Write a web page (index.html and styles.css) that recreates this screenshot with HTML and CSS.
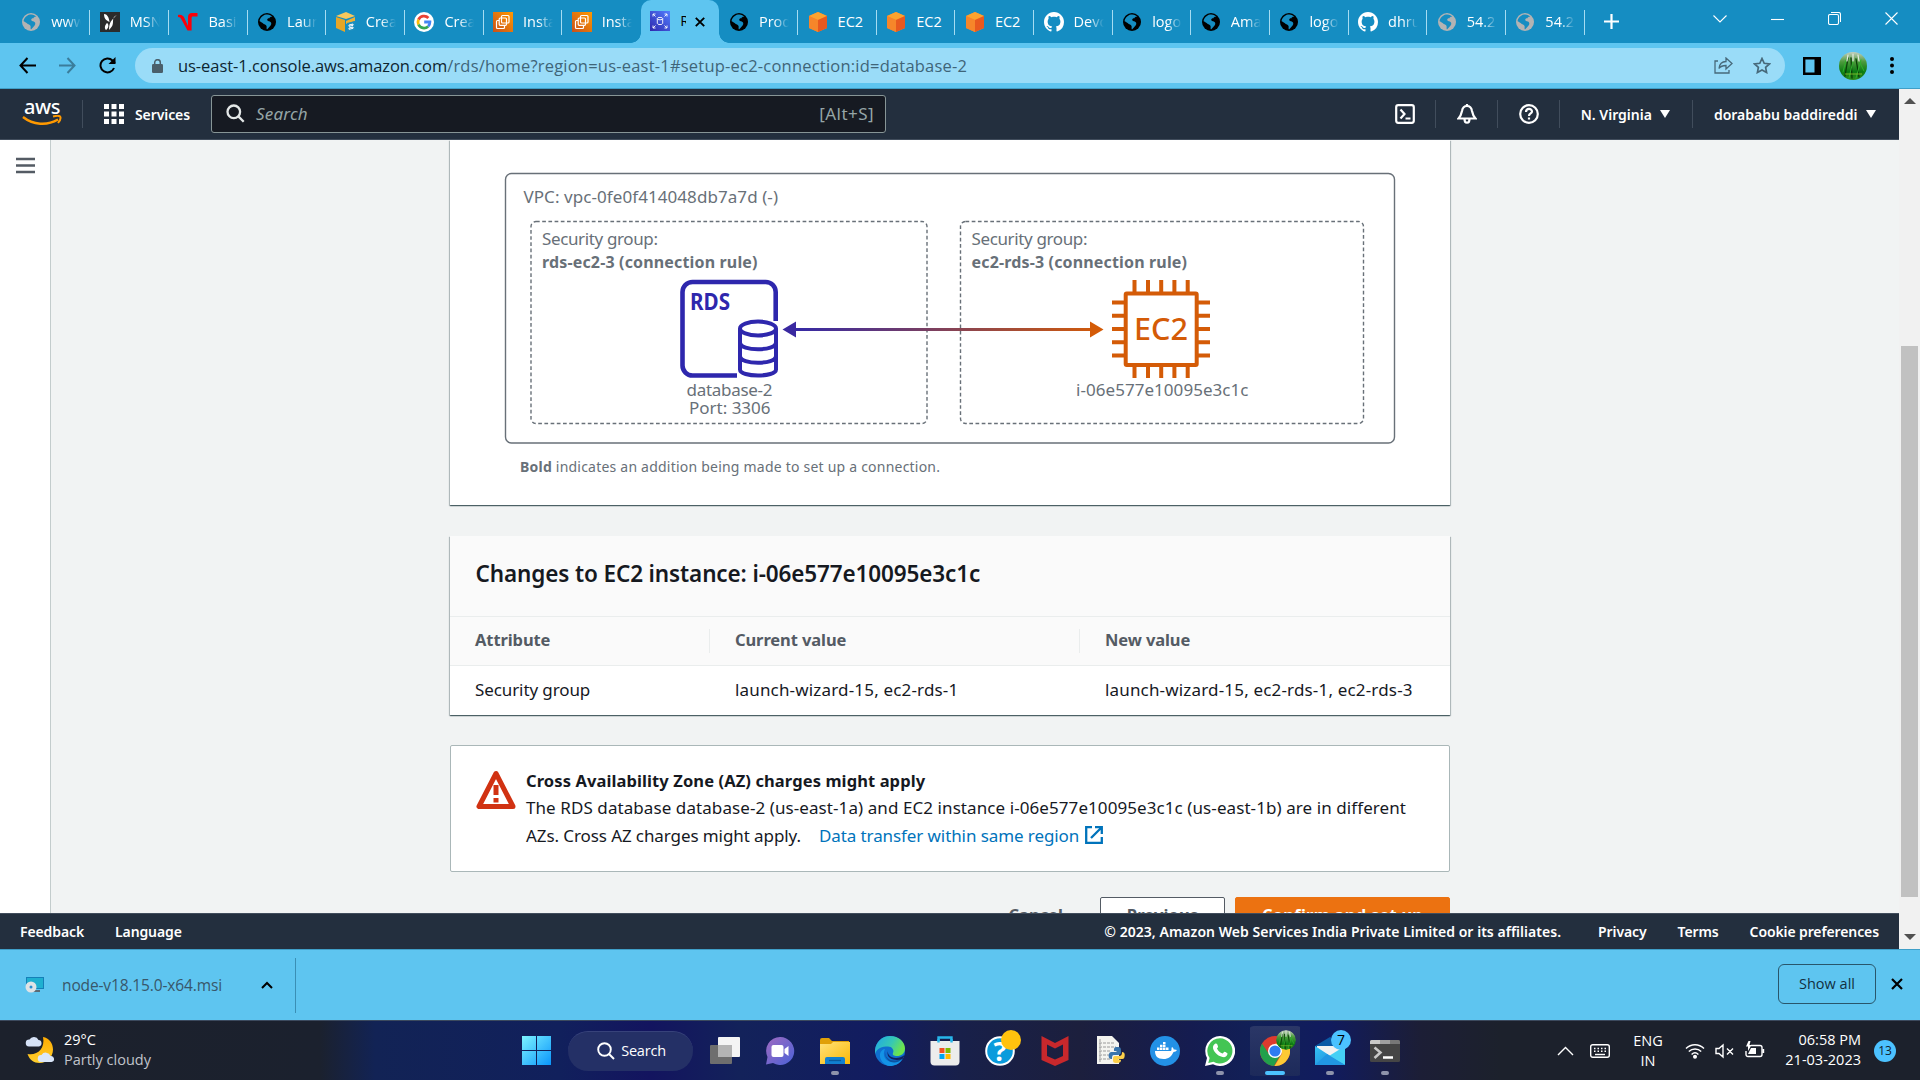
FILE: index.html
```html
<!DOCTYPE html>
<html lang="en">
<head>
<meta charset="utf-8">
<title>RDS - Set up EC2 connection</title>
<link rel="stylesheet" href="styles.css">
</head>
<body>
<svg class="defs" width="0" height="0">
  <defs>
    <linearGradient id="gInst" x1="0" y1="1" x2="1" y2="0"><stop offset="0" stop-color="#c8511b"/><stop offset="1" stop-color="#f90"/></linearGradient>
    <linearGradient id="gRds" x1="0" y1="1" x2="1" y2="0"><stop offset="0" stop-color="#2e27ad"/><stop offset="1" stop-color="#527fff"/></linearGradient>
    <linearGradient id="gArrow" gradientUnits="userSpaceOnUse" x1="782" y1="0" x2="1103" y2="0"><stop offset="0" stop-color="#2e27ad"/><stop offset="1" stop-color="#d45b07"/></linearGradient>
    <linearGradient id="gWin" x1="0" y1="0" x2="1" y2="1"><stop offset="0" stop-color="#7df3ff"/><stop offset="1" stop-color="#0a95fb"/></linearGradient>
    <linearGradient id="gTeams" x1="0" y1="0" x2="1" y2="1"><stop offset="0" stop-color="#a06ac0"/><stop offset="1" stop-color="#4a62d8"/></linearGradient>
    <linearGradient id="gFolder" x1="0" y1="0" x2="1" y2="1"><stop offset="0" stop-color="#ffe27a"/><stop offset="1" stop-color="#fbb805"/></linearGradient>
    <linearGradient id="gEdge" x1="0" y1="0" x2="1" y2=".4"><stop offset="0" stop-color="#1fa6e8"/><stop offset=".6" stop-color="#36c8b4"/><stop offset="1" stop-color="#6de44d"/></linearGradient>
    <linearGradient id="gMoon" x1="0" y1="0" x2="0" y2="1"><stop offset="0" stop-color="#ffab00"/><stop offset="1" stop-color="#ffcf2e"/></linearGradient>
    <linearGradient id="gMail" x1="0" y1="0" x2="1" y2="1"><stop offset="0" stop-color="#35c1f3"/><stop offset="1" stop-color="#1b84d8"/></linearGradient>
    <linearGradient id="gGrass" x1="0" y1="0" x2="0" y2="1"><stop offset="0" stop-color="#c4cfc0"/><stop offset=".35" stop-color="#4c9a3c"/><stop offset=".7" stop-color="#0b7a12"/><stop offset="1" stop-color="#2f8a1c"/></linearGradient>
  </defs>
  <symbol id="globe" viewBox="0 0 20 20"><circle cx="10" cy="10" r="9" fill="currentColor"/><path d="M9 2.500c3-.4 5 .6 6.300 2.300-1.500-.3-2.600.3-2.800 1.400-1.300-.2-2.300.4-2.300 1.600 0 1.300 1.500 1.300 2.600 1.700 1.600.6 2 2.400.8 4-1 1.400-2.400 2.600-3.600 4-.8-.6-.2-2-.4-3.200-.3-1.500-2.600-1.800-4-3.200C4.500 10 3.400 9.500 2.600 9.200 2.800 6.300 5.500 3.200 9 2.500z" class="globe-land"/></symbol>
  <symbol id="gh" viewBox="0 0 16 16"><path fill="#fff" d="M8 0C3.580 0 0 3.580 0 8c0 3.540 2.290 6.530 5.470 7.590.4.070.55-.17.55-.38 0-.19-.01-.82-.01-1.490-2.010.37-2.530-.49-2.690-.94-.09-.23-.48-.94-.82-1.130-.28-.15-.68-.52-.01-.53.63-.01 1.080.58 1.230.82.72 1.210 1.870.87 2.330.66.07-.52.28-.87.51-1.070-1.780-.2-3.640-.89-3.640-3.950 0-.87.31-1.590.82-2.150-.08-.2-.36-1.020.08-2.120 0 0 .67-.21 2.200.82.64-.18 1.320-.27 2-.27s1.360.09 2 .27c1.530-1.040 2.200-.82 2.200-.82.44 1.100.16 1.920.08 2.120.51.56.82 1.270.82 2.150 0 3.070-1.870 3.750-3.650 3.950.29.25.54.73.54 1.480 0 1.070-.01 1.930-.01 2.200 0 .21.15.46.55.38A8.010 8.010 0 0 0 16 8c0-4.420-3.580-8-8-8z"/></symbol>
  <symbol id="cube" viewBox="0 0 20 20"><path d="M10 0l9 4v12l-9 4-9-4V4z" fill="#f58536"/><path d="M10 0l9 4-9 4-9-4z" fill="#fda32e"/><path d="M10 8l9-4v12l-9 4z" fill="#e8591f"/><path d="M1 4l9 4v12l-9-4z" fill="#f6862a"/></symbol>
  <symbol id="inst" viewBox="0 0 20 20"><path d="M0 0h20v20H0z" fill="url(#gInst)"/><g fill="none" stroke="#fff" stroke-width="1.200"><rect x="8.500" y="3.500" width="7.500" height="7.500" rx="1"/><rect x="6.200" y="6" width="7.300" height="7.300" rx="1"/><path d="M6 8.500H4.500a1 1 0 0 0-1 1v6a1 1 0 0 0 1 1h6a1 1 0 0 0 1-1v-2"/></g></symbol>
  <symbol id="google" viewBox="0 0 20 20"><circle cx="10" cy="10" r="10" fill="#fff"/><g fill="none" stroke-width="2.800"><path d="M14.400 6a6 6 0 0 0-9.900 1.600" stroke="#ea4335"/><path d="M4.500 7.600a6 6 0 0 0 0 4.900" stroke="#fbbc05"/><path d="M4.500 12.500a6 6 0 0 0 9.600 1.900" stroke="#34a853"/><path d="M10.200 10h5.700c0 1.800-.6 3.300-1.800 4.400" stroke="#4285f4"/></g></symbol>
  <symbol id="grass" viewBox="0 0 28 28"><circle cx="14" cy="14" r="14" fill="url(#gGrass)"/><g fill="none" stroke-linecap="round"><path d="M6 24L9 6M13 26l-1-20M20 25L17 7" stroke="#0a3d08" stroke-width="1.300"/><path d="M4 20L7 8M10 26L14 9M17 26L22 8M25 19l-4-8" stroke="#2fb02c" stroke-width="1"/><path d="M9 3l-1 6M14 2v7M19 3l1 6" stroke="#e6ece4" stroke-width="1.200"/></g><path d="M6 22h17" stroke="#96c431" stroke-width=".8"/></symbol>
</svg>

<div class="tabs">
  <div class="tab"><svg class="fav gray"><use href="#globe"/></svg><span>www.</span></div>
  <div class="tab"><svg class="fav" viewBox="0 0 20 20"><path d="M0 0h20v20H0z" fill="#2b2b2b"/><path d="M4 2c3 0 5 3 5.500 8C8 9 4 8 4 2zM17 3c-3 1-4 3-4 6s0 5-4 9c0-5 1-8 3-10s3-4 5-5zM7 11c2 1 2 5-1 7-2-2-1-5 1-7z" fill="#fff"/></svg><span>MSN</span></div>
  <div class="tab"><svg class="fav" viewBox="0 0 20 20"><path d="M0 3c3-.8 5.500.5 6.500 3.200L10 14V5c0-2.500 1.500-4 4-4h5.500v3.500H15c-1 0-1.400.5-1.400 1.500v12.500H9.500L3.500 7.500C2.800 5.800 1.800 5 0 5z" fill="#fb0009"/></svg><span>Basic</span></div>
  <div class="tab"><svg class="fav"><use href="#globe"/></svg><span>Laun</span></div>
  <div class="tab"><svg class="fav" viewBox="0 0 20 20"><path d="M0 4l10-4 9 4-9 3z" fill="#f9c85d"/><path d="M0 5l9 3v12l-9-4z" fill="#e8a626"/><path d="M10 9l9-4v4l-9 3z" fill="#f0b133"/><path d="M11 11l8-2v9l-8 2z" fill="#1d8fc0"/><path d="M13 13l4-1v1.300l-4 1zM13 16l4-1v1.300l-4 1z" stroke="#fff" fill="none"/></svg><span>Creat</span></div>
  <div class="tab"><svg class="fav"><use href="#google"/></svg><span>Creat</span></div>
  <div class="tab"><svg class="fav"><use href="#inst"/></svg><span>Instan</span></div>
  <div class="tab"><svg class="fav"><use href="#inst"/></svg><span>Instan</span></div>
  <div class="tab active"><svg class="fav" viewBox="0 0 20 20"><path d="M0 0h20v20H0z" fill="url(#gRds)"/><g fill="none" stroke="#fff" stroke-width=".9"><path d="M3 5.500V3h2.500M14.500 3H17v2.500M17 14.500V17h-2.500M5.500 17H3v-2.500M3 3l2.500 2.500M17 3l-2.500 2.500M17 17l-2.500-2.500M3 17l2.500-2.500"/><ellipse cx="10" cy="7.600" rx="2.700" ry="1.200"/><path d="M7.300 7.600v4.800c0 1.600 5.400 1.600 5.400 0V7.600"/></g></svg><span>R</span><svg class="tab-x" viewBox="0 0 10 10"><path d="M.8.800l8.400 8.400M9.200.800L.8 9.200" stroke="#000" stroke-width="1.900"/></svg></div>
  <div class="tab"><svg class="fav"><use href="#globe"/></svg><span>Prod</span></div>
  <div class="tab"><svg class="fav"><use href="#cube"/></svg><span class="full">EC2</span></div>
  <div class="tab"><svg class="fav"><use href="#cube"/></svg><span class="full">EC2</span></div>
  <div class="tab"><svg class="fav"><use href="#cube"/></svg><span class="full">EC2</span></div>
  <div class="tab"><svg class="fav"><use href="#gh"/></svg><span>Devo</span></div>
  <div class="tab"><svg class="fav"><use href="#globe"/></svg><span>logo</span></div>
  <div class="tab"><svg class="fav"><use href="#globe"/></svg><span>Ama</span></div>
  <div class="tab"><svg class="fav"><use href="#globe"/></svg><span>logo</span></div>
  <div class="tab"><svg class="fav"><use href="#gh"/></svg><span>dhru</span></div>
  <div class="tab"><svg class="fav gray"><use href="#globe"/></svg><span>54.2</span></div>
  <div class="tab"><svg class="fav gray"><use href="#globe"/></svg><span>54.2</span></div>
  <svg class="plus" viewBox="0 0 15 15"><path d="M7.500 0v15M0 7.500h15" stroke="#fff" stroke-width="2.200"/></svg>
  <div class="winctl">
    <svg width="14" height="8" viewBox="0 0 14 8"><path d="M.5.500L7 7 13.500.500"/></svg>
    <svg width="13" height="8" viewBox="0 0 13 8"><path d="M0 4.500h13"/></svg>
    <svg width="13" height="13" viewBox="0 0 13 13"><rect x=".5" y="2.500" width="10" height="10" rx="1.500"/><path d="M3 .5h7.500a2 2 0 0 1 2 2V10"/></svg>
    <svg width="13" height="13" viewBox="0 0 13 13"><path d="M.5.500l12 12M12.500.500l-12 12"/></svg>
  </div>
</div>

<div class="toolbar">
  <svg class="nav-ic" viewBox="0 0 17 17"><path d="M8.500 1L1.500 8.500l7 7.500M1.500 8.500H17" stroke="#000"/></svg>
  <svg class="nav-ic" viewBox="0 0 17 17"><path d="M8.500 1l7 7.500-7 7.500M15.500 8.500H0" stroke="#3a7d9b"/></svg>
  <svg class="nav-ic" viewBox="0 0 17 17"><path d="M15 11a7 7 0 1 1-1.500-7.500L16 6" stroke="#000"/><path d="M16.500 0v7h-7z" fill="#000" stroke="none"/></svg>
  <div class="omni">
    <svg width="11" height="14" viewBox="0 0 11 14"><rect y="5" width="11" height="9" rx="1.200" fill="#4a5f6b"/><path d="M2.700 5V3.500a2.800 2.800 0 0 1 5.600 0V5" fill="none" stroke="#4a5f6b" stroke-width="1.500"/></svg>
    <span class="url"><b>us-east-1.console.aws.amazon.com</b>/rds/home?region=us-east-1#setup-ec2-connection:id=database-2</span>
    <svg width="19" height="17" viewBox="0 0 19 17"><path d="M4 4H1v12h14v-3M5 11.500c.5-4.500 3.500-7 7-7V1l6 5.500L12 12V8.500c-3 0-5.500.8-7 3z" fill="none" stroke="#47697a" stroke-width="1.300"/></svg>
    <svg class="star" width="18" height="17" viewBox="0 0 18 17"><path d="M9 1.500l2.200 4.800 5.300.6-3.900 3.500 1 5.100L9 13l-4.600 2.500 1-5.100L1.500 6.900l5.300-.6z" fill="none" stroke="#47697a" stroke-width="1.700"/></svg>
  </div>
  <svg class="side" width="18" height="18" viewBox="0 0 18 18"><path d="M1.200 1.200h15.600v15.600H1.200z" fill="none" stroke="#000" stroke-width="2.400"/><path d="M11.500 1H17v16h-5.500z"/></svg>
  <svg class="ava" width="28" height="28"><use href="#grass"/></svg>
  <svg class="dots" width="4" height="17" viewBox="0 0 4 17"><circle cx="2" cy="2" r="2"/><circle cx="2" cy="8.500" r="2"/><circle cx="2" cy="15" r="2"/></svg>
</div>

<div class="viewport">
  <div class="page">
    <header class="aws">
      <div class="logo"><span class="logo-t">aws</span><svg viewBox="0 0 40 12" width="40" height="12"><path d="M1 2c10 8 24 9 35 2.500" fill="none" stroke="#f90" stroke-width="2.400"/><path d="M31 1.500c4-1 6-1 7 0s0 4-2 6.500" fill="none" stroke="#f90" stroke-width="2"/></svg></div>
      <i class="sep s1"></i>
      <svg class="grid" width="20" height="20" viewBox="0 0 20 20" fill="#fff"><path d="M0 0h5v5H0zM7.500 0h5v5h-5zM15 0h5v5h-5zM0 7.500h5v5H0zM7.500 7.500h5v5h-5zM15 7.500h5v5h-5zM0 15h5v5H0zM7.500 15h5v5h-5zM15 15h5v5h-5z"/></svg>
      <span class="svc e15m">Services</span>
      <div class="search"><svg width="19" height="19" viewBox="0 0 19 19" fill="none" stroke="#e4e8e8" stroke-width="2.300"><circle cx="7.800" cy="7.800" r="6.300"/><path d="M12.400 12.400l5.300 5.300"/></svg><em>Search</em><span class="alt">[Alt+S]</span></div>
      <div class="aws-r">
        <svg class="ic" viewBox="0 0 20 20"><rect x="1.200" y="1.200" width="17.600" height="17.600" rx="2"/><path d="M5.500 5.500L9.500 10l-4 4.500M10.500 14.500h5"/></svg>
        <i class="sep"></i>
        <svg class="ic" viewBox="0 0 20 20"><path d="M1.500 14.500C4 12 4.500 9.500 5 7c.5-3 2-5 5-5s4.500 2 5 5c.5 2.500 1 5 3.500 7.500zM7.500 15c0 5 5 5 5 0"/><path d="M10 0v2"/></svg>
        <i class="sep"></i>
        <svg class="ic" viewBox="0 0 20 20"><circle cx="10" cy="10" r="8.800"/><path d="M7 8c0-4 6-4 6-.5 0 2-3 2-3 4.500M10 13.500v2"/></svg>
        <i class="sep"></i>
        <span class="region e15m">N. Virginia</span><i class="tri"></i>
        <i class="sep s2"></i>
        <span class="user e15m">dorababu baddireddi</span><i class="tri"></i>
      </div>
    </header>
    <div class="body">
      <aside><svg width="19" height="17" viewBox="0 0 19 17"><path d="M0 2h19M0 8.500h19M0 15h19" stroke="#545b64" stroke-width="2.400"/></svg></aside>
      <main>
        <section class="card diagram">
          <svg width="1000" height="365" viewBox="450 140 1000 365">
            <g fill="none" stroke="#687078">
              <rect x="505.500" y="173.500" width="889" height="269.500" rx="6" stroke-width="1.400"/>
              <g stroke-width="1.400" stroke-dasharray="3.700 2.500"><rect x="531" y="221.500" width="396" height="202" rx="5"/><rect x="960.500" y="221.500" width="403" height="202" rx="5"/></g>
            </g>
            <g class="dt">
              <text x="523.500" y="203" textLength="254.500">VPC: vpc-0fe0f414048db7a7d (-)</text>
              <text x="542" y="245" textLength="116">Security group:</text>
              <text x="542" y="268" textLength="215.500" class="b">rds-ec2-3 (connection rule)</text>
              <text x="971.500" y="245" textLength="116">Security group:</text>
              <text x="971.500" y="268" textLength="215.500" class="b">ec2-rds-3 (connection rule)</text>
              <text x="686.500" y="396" textLength="86">database-2</text>
              <text x="689" y="414" textLength="81.500">Port: 3306</text>
              <text x="1076" y="396" textLength="172.500">i-06e577e10095e3c1c</text>
            </g>
            <g fill="none" stroke="#2e27ad" stroke-width="4.600">
              <path d="M775.700 321V292a10 10 0 0 0-10-10H692.500a10 10 0 0 0-10 10v73.500a10 10 0 0 0 10 10H737"/>
              <g stroke-width="4"><ellipse cx="758" cy="328.500" rx="18" ry="7"/><path d="M740 328.500v41c0 8 36 8 36 0v-41M740 342.500c0 9 36 9 36 0M740 356c0 9 36 9 36 0"/></g>
            </g>
            <text class="rds" x="690" y="310" textLength="40" lengthAdjust="spacingAndGlyphs">RDS</text>
            <path d="M794 329.500H1092" stroke="url(#gArrow)" stroke-width="2.800"/>
            <path d="M794 328.100H1092v2.800H794z" fill="url(#gArrow)"/>
            <path d="M782.500 329.500l13.500-8v16z" fill="#3a29a0"/><path d="M1103.500 329.500l-13.500-8v16z" fill="#d45b07"/>
            <g fill="none" stroke="#d45b07" stroke-width="4">
              <rect x="1125.700" y="293.500" width="71" height="71.500" rx="1"/>
              <path d="M1134.500 280v12M1148 280v12M1161.200 280v12M1174.400 280v12M1187.700 280v12M1134.500 366v12M1148 366v12M1161.200 366v12M1174.400 366v12M1187.700 366v12M1112 302.500h12M1112 315.700h12M1112 329h12M1112 342.300h12M1112 355.600h12M1198 302.500h12M1198 315.700h12M1198 329h12M1198 342.300h12M1198 355.600h12"/>
            </g>
            <text class="ec2" x="1134" y="339.500" textLength="54" lengthAdjust="spacingAndGlyphs">EC2</text>
            <text class="note" x="520" y="472" textLength="420"><tspan class="nb">Bold</tspan> indicates an addition being made to set up a connection.</text>
          </svg>
        </section>
        <section class="card changes">
          <h2>Changes to EC2 instance: i-06e577e10095e3c1c</h2>
          <div class="row th"><div>Attribute</div><div>Current value</div><div>New value</div></div>
          <div class="row td"><div>Security group</div><div class="v">launch-wizard-15, ec2-rds-1</div><div class="v">launch-wizard-15, ec2-rds-1, ec2-rds-3</div></div>
        </section>
        <section class="alert">
          <svg width="40" height="40" viewBox="0 0 40 40"><path d="M20 3.500L3 36.500h34z" fill="none" stroke="#d13212" stroke-width="5" stroke-linejoin="round"/><path d="M20 15v10M20 28v4.500" stroke="#d13212" stroke-width="5"/></svg>
          <div class="al-t">
            <div class="al-h">Cross Availability Zone (AZ) charges might apply</div>
            <div class="al-1">The RDS database database-2 (us-east-1a) and EC2 instance i-06e577e10095e3c1c (us-east-1b) are in different</div>
            <div class="al-3"><span class="al-2">AZs. Cross AZ charges might apply.</span><a><span>Data transfer within same region</span><svg width="18" height="18" viewBox="0 0 18 18"><path d="M7 1.200H1.200v15.600h15.600V11M10 1.200h6.800V8M16.500 1.500L6 12" fill="none" stroke="#0073bb" stroke-width="2.300"/></svg></a></div>
          </div>
        </section>
        <div class="btns"><span class="cancel">Cancel</span><span class="prev">Previous</span><span class="conf">Confirm and set up</span></div>
      </main>
    </div>
    <footer class="e15m"><span>Feedback</span><span>Language</span><span class="copy">© 2023, Amazon Web Services India Private Limited or its affiliates.</span><span>Privacy</span><span>Terms</span><span>Cookie preferences</span></footer>
  </div>
  <div class="sb"><i class="up"></i><i class="thumb"></i><i class="down"></i></div>
</div>

<div class="dl">
  <svg width="20" height="17" viewBox="0 0 20 17"><path d="M1 1h18v12H1z" fill="#1580b8"/><path d="M2 2h16v10H2z" fill="#1fb0d0"/><path d="M7 14h8v2H7z" fill="#5a6b76"/><circle cx="6" cy="11" r="5.500" fill="#dfe3e6"/><circle cx="6" cy="11" r="1.500" fill="#2a8fd0"/></svg>
  <span class="fn">node-v18.15.0-x64.msi</span>
  <svg class="chev" width="12" height="8" viewBox="0 0 12 8"><path d="M1 7l5-5 5 5" fill="none" stroke="#000" stroke-width="2"/></svg>
  <i></i>
  <span class="show">Show all</span>
  <svg class="dx" width="12" height="12" viewBox="0 0 12 12"><path d="M1 1l10 10M11 1L1 11" stroke="#000" stroke-width="2.200"/></svg>
</div>

<div class="task">
  <div class="wx"><svg width="30" height="30" viewBox="0 0 30 30"><path d="M18 2c6 1 10 6 10 12.500C28 22 22 28 14.500 28 9 28 4.500 25 2.500 19c9 2 18-5 15.500-17z" fill="url(#gMoon)"/><path d="M4 11.500a3.500 3.500 0 0 1 .5-7 5 5 0 0 1 9 .5 3.300 3.300 0 0 1 .5 6.500z" fill="#d5e2f7"/><path d="M16 27a3.500 3.500 0 0 1 .5-7 5 5 0 0 1 9 1 3 3 0 0 1 1 6z" fill="#dbe7fa"/></svg><div><span class="w1">29°C</span><span class="w2">Partly cloudy</span></div></div>
  <div class="apps">
    <svg class="win" width="29" height="29" viewBox="0 0 29 29" fill="url(#gWin)"><path d="M0 0h14v14H0zM15 0h14v14H15zM0 15h14v14H0zM15 15h14v14H15z"/></svg>
    <div class="pill"><svg width="18" height="18" viewBox="0 0 18 18" fill="none" stroke="#fff" stroke-width="1.900"><circle cx="7.500" cy="7.500" r="6.300"/><path d="M12 12l5 5"/></svg><span>Search</span></div>
    <div class="app"><svg viewBox="0 0 30 30"><rect x="8" y="1" width="22" height="20" rx="1" fill="#f4f4f4"/><rect y="9" width="22" height="19" rx="1" fill="#6e6e6e"/><path d="M8 9h14v12H8z" fill="#b4b4b4"/></svg></div>
    <div class="app"><svg viewBox="0 0 30 30"><path d="M15 1a14 14 0 1 1-7 26l-7 1.500L2.500 21A14 14 0 0 1 15 1z" fill="url(#gTeams)"/><rect x="6.500" y="9" width="12" height="12" rx="2" fill="#fff"/><path d="M19.500 13l4-3v10l-4-3z" fill="#fff"/></svg></div>
    <div class="app run"><svg viewBox="0 0 30 30"><path d="M0 4a2 2 0 0 1 2-2h7l3 3h17v6H0z" fill="#e0a008"/><path d="M0 8h11l2-2h17v22H0z" fill="url(#gFolder)"/><path d="M5 28v-5a2 2 0 0 1 2-2h16a2 2 0 0 1 2 2v5z" fill="#1180d0"/><path d="M9 24.500h12" stroke="#0a5a9c" stroke-width="1.300"/></svg></div>
    <div class="app"><svg viewBox="0 0 30 30"><circle cx="15" cy="15" r="15" fill="#0f6fd0"/><path d="M0 14C1 6 7 0 15 0c9 0 15 6 15 12.500 0 5-4 7.500-8 7.500-3 0-5-1-4-3 1.500-3-1-6.500-5-6.500C7 10.500 2 12 0 18z" fill="url(#gEdge)"/><path d="M10 13c-3 6 0 13 8 13 4 0 7-1 9.500-3-3 5-8 7-12.500 7C9 30 4 23 5 18c.5-3 3-5 5-5z" fill="#1493e6"/><path d="M10 16c0 6 5 10 13 8l4.500-2c-4 6-12 5.500-15 1.500-2-2.500-3-5-2.500-7.500z" fill="#0c53a0"/><path d="M13 14c-1 4 2 8 8 8 3 0 6-1 8.500-3-.5 1.500-1 2.500-2 4-6 2-15 1-15-6z" fill="#122060"/></svg></div>
    <div class="app"><svg viewBox="0 0 30 30"><path d="M8.500 8V1.500h13V8" fill="none" stroke="#27b6ea" stroke-width="2.400"/><path d="M.5 5h29v20.500a4 4 0 0 1-4 4h-21a4 4 0 0 1-4-4z" fill="#ececec"/><path d="M8.500 6.500V3M21.500 6.500V3" stroke="#27b6ea" stroke-width="2.400"/><path d="M9.500 12h5v5h-5z" fill="#f25022"/><path d="M15.500 12h5v5h-5z" fill="#7fba00"/><path d="M9.500 18h5v5h-5z" fill="#00a4ef"/><path d="M15.500 18h5v5h-5z" fill="#ffb900"/></svg></div>
    <div class="app"><svg viewBox="0 0 30 30"><circle cx="15" cy="15" r="13.800" fill="#0a9bdc" stroke="#fff" stroke-width="2"/><text class="qm" x="8.500" y="24.500">?</text></svg><i class="dot"></i></div>
    <div class="app"><svg viewBox="0 0 30 30"><path d="M1.500 0L15 7 28.500 0v24L15 30 1.500 24zM7 8.500V20l8 3.500 8-3.500V8.500L15 12.500z" fill="#c8282c" fill-rule="evenodd"/></svg></div>
    <div class="app"><svg viewBox="0 0 30 30"><path d="M2 0h15l7 7v21H2z" fill="#f4f4f0"/><path d="M5 3v23M4 7h15M4 11h17M4 15h12M4 19h12M4 23h12" stroke="#9a9a9a" stroke-width="1" stroke-dasharray="3 1"/><path d="M22 11c4 0 4 1 4 5 0 2-1 3-3 3h-4c-2 0-2 2-2 4-3 0-4-2-3-5 .5-2 2-2 4-2h4c0-1-3-.5-3-1 0-3 0-4 3-4z" fill="#3a76ae"/><path d="M22 27c-4 0-4-1-4-4s1-3 3-3h3c2 0 3-1 3-4 3 0 3 3 2.500 5S28 23 26 23h-3c0 1 3 .5 3 1 0 2-1 3-4 3z" fill="#fdd04a"/></svg></div>
    <div class="app"><svg viewBox="0 0 30 30"><circle cx="15" cy="15" r="15" fill="#2391e6"/><path d="M5 15h16c1-1 0-3 1-4 1 .5 1.500 1.500 1.700 2.500 1.300-.2 2.300 0 3.300.5-.7 1.300-2 2-3.500 2-2 4.500-5 7-10 7-6 0-8.500-3-8.500-8z" fill="#fff"/><path d="M7 11.500h2.500V14H7zM10 11.500h2.500V14H10zM13 11.500h2.500V14H13zM16 11.500h2.500V14H16zM10 8.800h2.500V11H10zM13 8.800h2.500V11H13zM13 6h2.500v2.300H13z" fill="#fff"/></svg></div>
    <div class="app run"><svg viewBox="0 0 30 30"><path d="M15 0a15 15 0 1 1-7 28.200L0 30l2-8A15 15 0 0 1 15 0z" fill="#fff"/><path d="M15 2.300a12.600 12.600 0 1 1-6.500 23.500L3.300 27l1.300-5A12.600 12.600 0 0 1 15 2.300z" fill="#43c554"/><path d="M10.500 7.500c1.500-.3 2 1 2.500 3 .2 1-1 1.500-1 2 1.500 3 3 4 5.500 5 .7 0 1.300-2 2-1.800 1 .3 3.500 1.300 3 2.300-.5 2.500-2.500 3.500-5 3-6-1.500-9-6-9.500-9-.2-2 1-4 2.500-4.500z" fill="#fff"/></svg></div>
    <div class="app run on"><svg viewBox="0 0 30 30"><circle cx="15" cy="15" r="15" fill="#dd3b2e"/><path d="M2 7.500A15 15 0 0 0 14 30l7-12-12 0z" fill="#22a04b"/><path d="M28 7.500H15l7 10L14.500 30A15 15 0 0 0 28 7.500z" fill="#fcc934"/><circle cx="15" cy="15" r="7" fill="#fff"/><circle cx="15" cy="15" r="5.600" fill="#2e7cf2"/></svg><svg class="dot g" viewBox="0 0 28 28"><use href="#grass"/></svg></div>
    <div class="app run"><svg viewBox="0 0 30 30"><path d="M0 10L15 1l15 9v6H0z" fill="#0a5aa6"/><path d="M2 10h26v12H2z" fill="#f2f2f2"/><path d="M0 10l20 13 10-6v12H0z" fill="url(#gMail)"/><path d="M30 10L14 20l16 9z" fill="#45d0f5"/><path d="M0 29h30L12 18z" fill="#2196e3"/></svg><i class="dot n">7</i></div>
    <div class="app run"><svg viewBox="0 0 30 30"><rect y="4" width="30" height="22" rx="1.500" fill="#454545"/><path d="M0 8V5.500A1.500 1.500 0 0 1 1.500 4H10v4z" fill="#c8c8c8"/><path d="M10 4h10v4H10z" fill="#a0a0a0"/><path d="M20 4h8.500A1.500 1.500 0 0 1 30 5.500V8H20z" fill="#777"/><path d="M4.500 11.500l6 5-6 5.500" fill="none" stroke="#c8c8c8" stroke-width="2.500"/><path d="M13 21.500h10" stroke="#fff" stroke-width="2.500"/></svg></div>
  </div>
  <div class="tray">
    <svg width="17" height="10" viewBox="0 0 17 10"><path d="M1 9l7.500-7.500L16 9"/></svg>
    <svg class="kb" width="20" height="14" viewBox="0 0 20 14"><rect x=".7" y=".7" width="18.600" height="12.600" rx="2"/><path d="M4 4.500h12M4 7.200h12" stroke-dasharray="1.500 2"/><path d="M5 10.500h10"/></svg>
    <div class="lang"><span>ENG</span><span>IN</span></div>
    <svg class="wifi" width="20" height="16" viewBox="0 0 20 16"><path d="M1 5.500c5-5 13-5 18 0M3.800 8.600c3.500-3.500 9-3.500 12.400 0M6.600 11.500c2-2 4.800-2 6.800 0"/><circle cx="10" cy="13.700" r="1.300" fill="#fff"/></svg>
    <svg class="spk" width="20" height="16" viewBox="0 0 20 16"><path d="M1 5.500v5h3l4 3.500V2L4 5.500zM12 5.500l6 6M18 5.500l-6 6"/></svg>
    <svg class="bat" width="20" height="17" viewBox="0 0 20 17"><path d="M6 4.500h9a2 2 0 0 1 2 2v7a2 2 0 0 1-2 2H3a2 2 0 0 1-2-2V10M18.500 8v4"/><path d="M6 7h5v6H3z" fill="#fff" stroke="none"/><path d="M3.500 0L1 5.500h2V10l3.500-6h-2L5.500 0z" fill="#fff" stroke="none"/></svg>
    <div class="clock"><span>06:58 PM</span><span>21-03-2023</span></div>
    <i class="n13">13</i>
  </div>
</div>
</body>
</html>
```
FILE: styles.css
```css
* { box-sizing: border-box; }
body { margin: 0; width: 1920px; height: 1080px; overflow: hidden; display: flex; flex-direction: column; font-family: "Open Sans", sans-serif; }
svg { display: block; flex: none; }
i { font-style: normal; }
span, .row div, .al-t div { white-space: nowrap; }
.defs { position: absolute; }
.e15m { font: 600 14px "Noto Sans", sans-serif; color: #fff; }

.tabs { height: 43px; background: #158dc2; display: flex; align-items: center; padding-left: 11.700px; flex: none; }
.tab { width: 78.650px; height: 25px; display: flex; align-items: center; padding-left: 9.500px; border-right: 1px solid #a5dcf2; flex: none; margin-top: 1px; }
.tab:nth-child(8) { border-color: transparent; }
.fav { width: 20px; height: 20px; color: #000; margin-top: -1px; }
.fav.gray { color: #b3b3b3; }
.globe-land { fill: #158dc2; }
.gray .globe-land { fill: #5f9ab8; }
.tab span { font-size: 14.500px; color: #fff; margin: -2px 0 0 10px; width: 30px; overflow: hidden; -webkit-mask-image: linear-gradient(90deg, #000 50%, transparent); }
.tab .full { -webkit-mask: none; }
.tab.active { background: #5ec5f0; height: 43px; margin-top: 0; border: 0; border-radius: 10px 10px 0 0; position: relative; }
.tab.active::before, .tab.active::after { content: ""; position: absolute; bottom: 0; width: 10px; height: 10px; }
.tab.active::before { left: -10px; background: radial-gradient(circle at 0 0, transparent 9.500px, #5ec5f0 10px); }
.tab.active::after { right: -10px; background: radial-gradient(circle at 100% 0, transparent 9.500px, #5ec5f0 10px); }
.tab.active span { color: #000; width: 6px; -webkit-mask: none; }
.tab-x { width: 10px; height: 10px; margin-left: 9px; }
.plus { width: 15px; height: 15px; margin-left: 19px; }
.winctl { margin: -6px 22px 0 auto; display: flex; align-items: center; gap: 44px; fill: none; stroke: #fff; stroke-width: 1.100; }

.toolbar { height: 46px; background: #5ec5f0; border-bottom: 1px solid #3f9fc8; display: flex; align-items: center; padding-left: 19px; flex: none; }
.nav-ic { width: 17px; height: 17px; fill: none; stroke-width: 2; margin-right: 23px; margin-top: -1px; }
.omni { width: 1650px; height: 35px; margin-left: -4px; background: #9adcf8; border-radius: 18px; display: flex; align-items: center; padding: 0 14px 0 17px; }
.url { font-size: 16.500px; letter-spacing: .21px; color: #3f6578; margin: -1px auto 0 15px; }
.url b { font-weight: 400; letter-spacing: -.06px; color: #0d2530; }
.star { margin-left: 20px; }
.side { margin-left: 18px; }
.ava { margin-left: 18px; }
.dots { margin-left: 23px; }

.viewport { height: 860px; display: flex; flex: none; }
.page { width: 1899px; display: flex; flex-direction: column; }
.aws { height: 51px; background: #232f3e; border-bottom: 1px solid #414d5c; display: flex; align-items: center; padding-left: 22px; flex: none; }
.logo { width: 40px; height: 28px; margin-top: -3px; color: #fff; }
.logo-t { display: block; font: 500 20px/16px "Noto Sans", sans-serif; letter-spacing: -.4px; text-align: center; }
.sep { width: 1px; height: 28px; background: #414d5c; }
.s1 { margin: 0 21px 0 20px; }
.svc { margin-left: 11px; width: 76px; letter-spacing: -.09px; }
.search { width: 675px; height: 38px; border: 1px solid #879596; border-radius: 3px; background: #161a22; display: flex; align-items: center; padding: 0 11px 2px 14px; color: #95a5a6; font: 17px "Noto Sans", sans-serif; }
.search em { margin-left: 11px; letter-spacing: .2px; }
.alt { margin-left: auto; letter-spacing: .45px; }
.aws-r { display: flex; align-items: center; margin-left: auto; padding-right: 23.500px; }
.ic { width: 20px; height: 20px; fill: none; stroke: #fff; stroke-width: 2.200; }
.aws-r .sep { margin: 0 20.500px; }
.tri { border: 5px solid transparent; border-top: 8px solid #fff; border-bottom: 0; margin-left: 8px; }
.aws-r .s2 { margin: 0 21px 0 22px; }
.body { height: 773px; display: flex; background: #f1f3f3; overflow: hidden; flex: none; }
aside { width: 51px; background: #fff; border-right: 1px solid #c3cccc; padding: 17px 0 0 16px; }
main { width: 1000px; margin-left: 399px; }
.card { background: #fff; box-shadow: 0 1px 1px 0 rgba(0,28,36,.5), 1px 1px 1px 0 rgba(0,28,36,.2), -1px 1px 1px 0 rgba(0,28,36,.2); }
.diagram { height: 365px; }
.dt, .note { font: 17px "Noto Sans", sans-serif; fill: #687078; }
.dt .b { font-weight: 700; font-size: 16px; }
.note { font-size: 14px; }
.nb { font-weight: 700; }
.rds { font: 700 23px "Noto Sans", sans-serif; fill: #2e27ad; }
.ec2 { font: 500 31px "Noto Sans", sans-serif; fill: #d45b07; }
.changes { margin-top: 31px; height: 179px; color: #16191f; font: 17px "Noto Sans", sans-serif; }
h2 { margin: 0; height: 81px; background: #fafafa; border-bottom: 1px solid #eaeded; padding-left: 25.500px; font: 600 22.500px/75px "Noto Sans", sans-serif; letter-spacing: -.12px; }
.row { display: grid; grid-template-columns: 260px 370px 370px; align-items: center; height: 49px; }
.row div { padding-left: 25px; line-height: 22px; padding-bottom: 2px; letter-spacing: -.1px; }
.row .v { letter-spacing: .17px; }
.th { background: #fafafa; border-bottom: 1px solid #eaeded; font-weight: 700; font-size: 16.500px; color: #545b64; }
.th div { border-right: 1px solid #eaeded; }
.th div:last-child { border: 0; }
.alert { margin-top: 30px; height: 127px; background: #fff; border: 1px solid #aab7b8; border-radius: 2px; padding: 24px 0 0 25px; display: flex; color: #16191f; font: 17px/27.500px "Noto Sans", sans-serif; }
.al-t { margin: -3px 0 0 10px; }
.al-h { font-weight: 700; font-size: 16.500px; letter-spacing: .1px; }
.al-1 { letter-spacing: .08px; margin-top: -.5px; }
.al-3, .al-3 a { display: flex; align-items: center; color: #0073bb; letter-spacing: -.09px; }
.al-2 { color: #16191f; margin-right: 18px; }
.al-3 svg { margin-left: 6px; }
.btns { margin-top: 25px; height: 40px; display: flex; justify-content: flex-end; text-align: center; font: 700 16.500px/34px "Noto Sans", sans-serif; color: #545b64; }
.cancel { margin-right: 37px; padding-top: 1px; }
.prev { width: 125px; border: 1px solid #545b64; border-radius: 2px; background: #fff; margin-right: 10px; letter-spacing: .1px; }
.conf { width: 215px; background: #ec7211; border-radius: 2px; color: #fff; border: 1px solid #ec7211; letter-spacing: .24px; }
footer { height: 36px; background: #232f3e; border-top: 1px solid #414d5c; display: flex; align-items: center; padding: 0 20px; gap: 31px; letter-spacing: -.11px; }
.copy { margin-left: auto; margin-right: 6px; letter-spacing: .03px; }
.sb { width: 21px; background: #f1f1f1; display: flex; flex-direction: column; align-items: center; justify-content: space-between; padding: 9px 0; }
.up { border: 6px solid transparent; border-bottom-color: #505050; border-top: 0; }
.down { border: 6px solid transparent; border-top-color: #505050; border-bottom: 0; }
.thumb { width: 17px; height: 551px; background: #c1c1c1; margin-top: 204px; }

.dl { height: 71px; background: #5ec5f0; border-top: 1px solid #3f9fc8; display: flex; align-items: center; padding: 0 17px 2px 25px; flex: none; }
.fn { font-size: 15.500px; letter-spacing: -.13px; color: #38576a; margin: 2px 0 0 17px; width: 199px; }
.chev { margin-top: 2px; }
.dl i { width: 1px; height: 55px; background: #3a8fb5; margin-left: 22px; margin-top: 3px; }
.show { width: 98px; height: 40px; border: 1px solid #29566b; border-radius: 6px; margin-left: auto; text-align: center; font-size: 14.500px; line-height: 37px; color: #12303f; }
.dx { margin-left: 15px; }

.task { height: 60px; flex: none; border-top: 1px solid #3c4a5e; display: grid; grid-template-columns: 522px 1fr 363px; align-items: center; color: #fff; background: linear-gradient(90deg, #1c212c 0, #1b212e 320px, #122355 375px, #11205c 560px, #13145f 650px, #13225a 740px, #121c60 880px, #18204a 960px, #1c1f3d 1080px, #151c50 1190px, #112058 1260px, #111b5e 1330px, #1c1e36 1420px, #1c212c 1500px); }
.wx { display: flex; padding-left: 25px; align-items: center; }
.wx div { margin: -2px 0 0 9px; display: flex; flex-direction: column; font-size: 14.500px; line-height: 20px; }
.wx svg { margin-top: -2px; }
.w2 { color: #c0c4cb; }
.apps { display: flex; align-items: center; height: 59px; }
.pill { width: 125px; height: 40px; border-radius: 20px; background: #243066; margin: 0 4.500px 0 17px; display: flex; align-items: center; justify-content: center; gap: 6px; font-size: 14.500px; letter-spacing: -.2px; border-top: 1px solid #37427a; padding-left: 2px; }
.pill span { margin-top: -1px; }
.app { width: 55px; height: 50px; display: grid; place-items: center; position: relative; }
.app > svg:first-child { width: 30px; height: 30px; }
.app.run::after { content: ""; position: absolute; bottom: 1px; left: 23.500px; width: 8px; height: 4px; border-radius: 2px; background: #8e93ab; }
.app.on { background: linear-gradient(#2b3767, #1d2a5a) center / 50px 50px no-repeat; border-radius: 6px; }
.app.on::after { width: 20px; left: 17.500px; background: #4cc2ff; }
.app .dot { position: absolute; left: 28.500px; top: 4px; width: 20px; height: 20px; border-radius: 50%; background: #ffc20e; }
.app .dot.g { background: none; }
.app .dot.n { background: #4cc2ff; color: #000; font-size: 14px; line-height: 20px; text-align: center; }
.qm { font: 700 27px "Noto Sans", sans-serif; fill: #fff; }
.tray { display: flex; align-items: center; fill: none; stroke: none; }
.tray svg { stroke: #fff; stroke-width: 1.400; }
.kb { margin-left: 16px; }
.lang { width: 50px; margin-left: 13px; display: flex; flex-direction: column; align-items: center; font-size: 14.500px; line-height: 20px; }
.wifi { margin-left: 12px; }
.spk { margin-left: 10px; }
.bat { margin-left: 10px; margin-top: -3px; }
.clock { width: 96px; margin-top: -2px; display: flex; flex-direction: column; align-items: flex-end; font-size: 14.500px; line-height: 20px; }
.n13 { width: 22px; height: 22px; border-radius: 50%; background: #4cc2ff; color: #10202c; font-size: 12px; line-height: 22px; text-align: center; margin-left: 13px; }
```
